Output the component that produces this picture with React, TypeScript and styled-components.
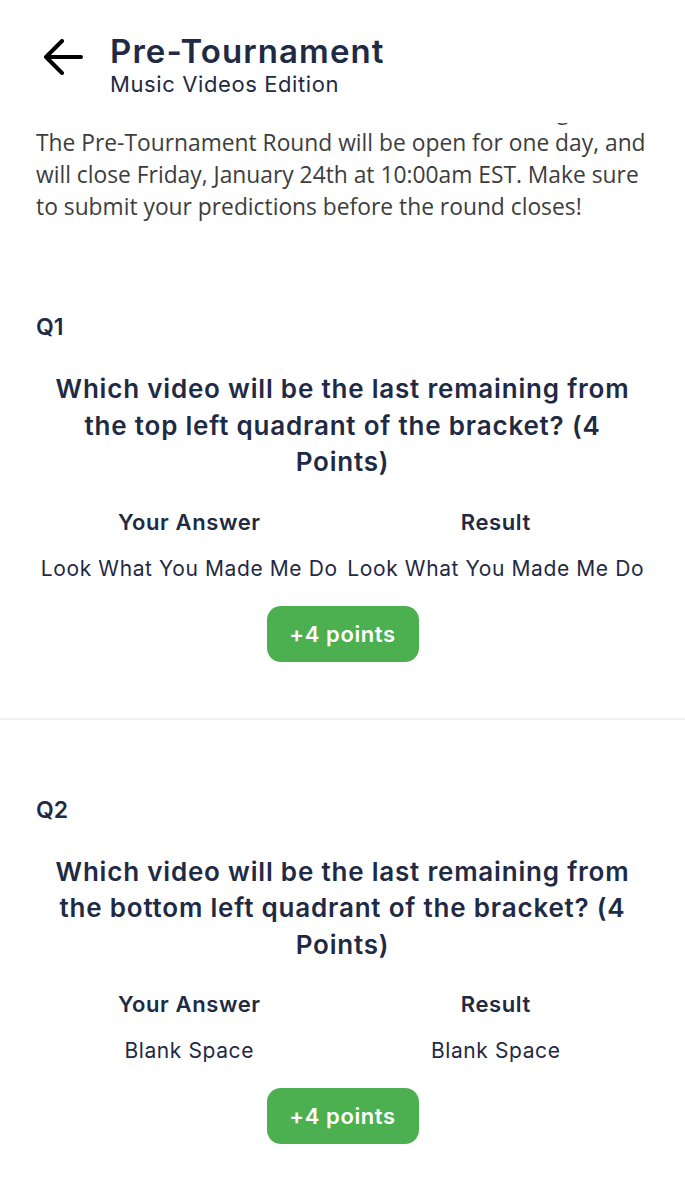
import React, { useLayoutEffect, useRef } from "react";
import styled, { createGlobalStyle } from "styled-components";

const GlobalStyle = createGlobalStyle`
  html, body {
    margin: 0;
    padding: 0;
    background: #ffffff;
  }
  body {
    font-family: Inter, "Noto Sans", sans-serif;
    color: #1f2a44;
  }
  * {
    box-sizing: border-box;
  }
`;

const Page = styled.div`
  display: flex;
  flex-direction: column;
  height: 1200px;
  background: #ffffff;
`;

const Header = styled.header`
  display: flex;
  align-items: flex-start;
  gap: 26px;
  height: 123px;
  padding: 33px 36px 0 42px;
  background: #ffffff;
  flex-shrink: 0;
`;

const BackButton = styled.button`
  display: flex;
  align-items: center;
  justify-content: center;
  width: 42px;
  height: 42px;
  margin-top: 3px;
  padding: 0;
  border: none;
  background: transparent;
  color: #000000;
  cursor: pointer;
`;

const TitleBlock = styled.div`
  display: flex;
  flex-direction: column;
`;

const Title = styled.h1`
  margin: 0;
  font-family: Inter, sans-serif;
  font-weight: 600;
  font-size: 33px;
  line-height: 37px;
  letter-spacing: 1.1px;
  color: #1f2a44;
`;

const Subtitle = styled.div`
  margin-top: 1px;
  font-family: Inter, sans-serif;
  font-weight: 400;
  font-size: 22px;
  line-height: 26px;
  letter-spacing: 0.6px;
  color: #1f2a44;
`;

const Scroller = styled.main`
  flex: 1;
  min-height: 0;
  overflow: hidden;
`;

const Feed = styled.div`
  padding-bottom: 120px;
`;

const Intro = styled.p`
  margin: 0 0 14px;
  padding: 0 34px 0 36px;
  font-family: "Open Sans", sans-serif;
  font-size: 22.8px;
  line-height: 32px;
  color: #3d3d3d;
`;

const IntroLine = styled.span`
  display: block;
`;

const Section = styled.section<{ $divided?: boolean }>`
  display: flex;
  flex-direction: column;
  align-items: center;
  padding: 75px 36px 56px;
  border-top: ${({ $divided }) => ($divided ? "2px solid #eef0f4" : "none")};
`;

const QLabel = styled.div`
  align-self: flex-start;
  font-weight: 600;
  font-size: 23px;
  line-height: 30px;
  color: #1f2a44;
`;

const Question = styled.h2`
  margin: 29px 0 0;
  max-width: 590px;
  text-align: center;
  font-weight: 600;
  font-size: 26px;
  line-height: 36.5px;
  letter-spacing: 0.8px;
  color: #1f2a44;
`;

const AnswerGrid = styled.div`
  display: grid;
  grid-template-columns: 1fr 1fr;
  row-gap: 17px;
  width: 100%;
  margin-top: 26px;
`;

const ColHead = styled.div`
  text-align: center;
  font-weight: 600;
  font-size: 22px;
  line-height: 30px;
  letter-spacing: 0.6px;
  color: #1f2a44;
`;

const ColValue = styled.div`
  text-align: center;
  font-weight: 400;
  font-size: 21px;
  line-height: 30px;
  letter-spacing: 0.6px;
  white-space: nowrap;
  color: #1f2a44;
`;

const PointsBadge = styled.div`
  display: inline-flex;
  align-items: center;
  justify-content: center;
  width: 152px;
  height: 56px;
  margin-top: 22px;
  border-radius: 14px;
  background: #4caf50;
  color: #ffffff;
  font-weight: 600;
  font-size: 22px;
  letter-spacing: 0.6px;
`;

const questions = [
  {
    id: "Q1",
    text: "Which video will be the last remaining from the top left quadrant of the bracket? (4 Points)",
    answer: "Look What You Made Me Do",
    result: "Look What You Made Me Do",
    points: 4,
  },
  {
    id: "Q2",
    text: "Which video will be the last remaining from the bottom left quadrant of the bracket? (4 Points)",
    answer: "Blank Space",
    result: "Blank Space",
    points: 4,
  },
];

function BackArrow() {
  return (
    <svg width="40" height="36" viewBox="0 0 40 36" fill="none">
      <path
        d="M3 18H38M3 18L19 2M3 18L19 34"
        stroke="currentColor"
        strokeWidth="4"
        strokeLinecap="round"
        strokeLinejoin="round"
      />
    </svg>
  );
}

export default function App() {
  const scrollRef = useRef<HTMLElement>(null);

  // page is shown scrolled a bit, first intro line sits under the header
  useLayoutEffect(() => {
    if (scrollRef.current) scrollRef.current.scrollTop = 28;
  }, []);

  return (
    <>
      <GlobalStyle />
      <Page>
        <Header>
          <BackButton aria-label="Back">
            <BackArrow />
          </BackButton>
          <TitleBlock>
            <Title>Pre-Tournament</Title>
            <Subtitle>Music Videos Edition</Subtitle>
          </TitleBlock>
        </Header>
        <Scroller ref={scrollRef}>
          <Feed>
            <Intro>
              <IntroLine>Welcome to the first round of the bracket challenge.</IntroLine>
              The Pre-Tournament Round will be open for one day, and will close
              Friday, January 24th at 10:00am EST. Make sure to submit your
              predictions before the round closes!
            </Intro>
            {questions.map((q, i) => (
              <Section key={q.id} $divided={i > 0}>
                <QLabel>{q.id}</QLabel>
                <Question>{q.text}</Question>
                <AnswerGrid>
                  <ColHead>Your Answer</ColHead>
                  <ColHead>Result</ColHead>
                  <ColValue>{q.answer}</ColValue>
                  <ColValue>{q.result}</ColValue>
                </AnswerGrid>
                <PointsBadge>+{q.points} points</PointsBadge>
              </Section>
            ))}
          </Feed>
        </Scroller>
      </Page>
    </>
  );
}
